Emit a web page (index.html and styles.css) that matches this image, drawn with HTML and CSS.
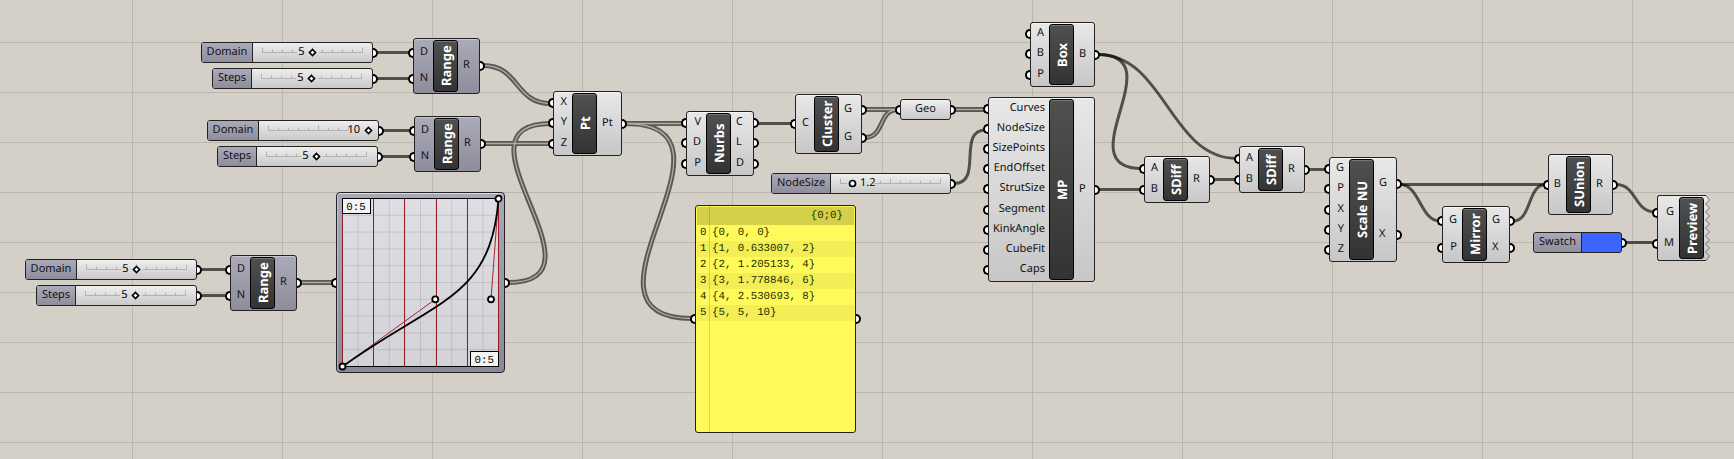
FILE: index.html
```
<!DOCTYPE html>
<html lang="en">
<head>
<meta charset="utf-8">
<title>Node graph</title>
<link rel="stylesheet" href="styles.css">
</head>
<body>
<svg class="defs" width="0" height="0">
  <defs>
    <linearGradient id="face" x1="0" y1="0" x2="0" y2="1"><stop offset="0" stop-color="#e8e8e8"/><stop offset="1" stop-color="#c7c7c7"/></linearGradient>
    <symbol id="rail-mid" viewBox="0 0 102 19">
      <path class="rail" d="M.5 4.500V9.500M10.500 6.500V9.500M20.500 6.500V9.500M30.500 6.500V9.500M50.500 4.500V9.500M60.500 6.500V9.500M70.500 6.500V9.500M80.500 6.500V9.500M90.500 6.500V9.500M100.500 4.500V9.500M0 9.500H35M57 9.500H101"/>
      <text x="36.200" y="12">5</text>
      <path class="knob" d="M50.500 6.500L53.500 9.500L50.500 12.500L47.500 9.500Z"/>
    </symbol>
    <symbol id="rail-end" viewBox="0 0 102 19">
      <path class="rail" d="M.5 4.500V9.500M10.500 6.500V9.500M20.500 6.500V9.500M30.500 6.500V9.500M40.500 6.500V9.500M50.500 4.500V9.500M60.500 6.500V9.500M70.500 6.500V9.500M80.500 6.500V9.500M0 9.500H80"/>
      <text x="79.500" y="12">10</text>
      <path class="knob" d="M100.500 6.500L103.500 9.500L100.500 12.500L97.500 9.500Z"/>
    </symbol>
    <symbol id="rail-low" viewBox="0 0 102 19">
      <path class="rail" d="M.5 4.500V9.500M40.500 6.500V9.500M50.500 4.500V9.500M60.500 6.500V9.500M70.500 6.500V9.500M80.500 6.500V9.500M90.500 6.500V9.500M100.500 4.500V9.500M0 9.500H7M34 9.500H101"/>
      <text x="20" y="12">1.2</text>
      <circle class="knob" cx="12.500" cy="9.500" r="3"/>
    </symbol>
  </defs>
</svg>
<main class="canvas">
  <svg class="wires" width="1734" height="459">
    <defs>
      <g id="lists">
        <path d="M300 282.500H333"/>
        <path d="M483 65.500C520 65.500 514 103.500 551 103.500"/>
        <path d="M484 143.500H551"/>
        <path d="M508 282.500C616 282.500 443 123.500 551 123.500"/>
        <path d="M625 123.500C760 123.500 557 318.500 692 318.500"/>
        <path d="M625 123.500H684"/>
        <path d="M865 109.500H898"/>
        <path d="M865 137.500C885 137.500 878 109.500 898 109.500"/>
        <path d="M954 109.500H986"/>
      </g>
    </defs>
    <g class="single">
      <path d="M376 52.500H411M376 78.500H411M382 130.500H412M381 156.500H412M200 269.500H228M200 295.500H228"/>
      <path d="M757 123.500H793"/>
      <path d="M954 183.500C984 183.500 956 130 986 130"/>
      <path d="M1098 54.500C1175 54.500 1065 168.500 1142 168.500"/>
      <path d="M1098 54.500C1165 54.500 1170 158.500 1237 158.500"/>
      <path d="M1098 189.500H1142M1213 179.500H1237M1308 169.500H1327M1400 184.500H1546M1625 242.500H1655"/>
      <path d="M1400 184.500C1420 184.500 1420 221 1440 221"/>
      <path d="M1513 221C1532 221 1527 184.500 1546 184.500"/>
      <path d="M1616 184.500C1637 184.500 1634 212 1655 212"/>
    </g>
    <use href="#lists" class="list-outer"/>
    <use href="#lists" class="list-inner"/>
  </svg>

  <div class="slider s1"><span class="tag">Domain</span><svg width="102" height="19"><use href="#rail-mid"/></svg><i class="grip right"></i></div>
  <div class="slider s2"><span class="tag">Steps</span><svg width="102" height="19"><use href="#rail-mid"/></svg><i class="grip right"></i></div>
  <div class="slider s3"><span class="tag">Domain</span><svg width="102" height="19"><use href="#rail-end"/></svg><i class="grip right"></i></div>
  <div class="slider s4"><span class="tag">Steps</span><svg width="102" height="19"><use href="#rail-mid"/></svg><i class="grip right"></i></div>
  <div class="slider s5"><span class="tag">Domain</span><svg width="102" height="19"><use href="#rail-mid"/></svg><i class="grip right"></i></div>
  <div class="slider s6"><span class="tag">Steps</span><svg width="102" height="19"><use href="#rail-mid"/></svg><i class="grip right"></i></div>
  <div class="slider s7"><span class="tag">NodeSize</span><svg width="102" height="19"><use href="#rail-low"/></svg><i class="grip right"></i></div>
  <div class="slider swatch"><span class="tag">Swatch</span><i class="grip right"></i></div>
  <div class="slider geo"><i class="grip left"></i><span>Geo</span><i class="grip right"></i></div>

  <div class="node muted range1"><div class="in"><span>D</span><span>N</span></div><b>Range</b><div class="out"><span>R</span></div></div>
  <div class="node muted range2"><div class="in"><span>D</span><span>N</span></div><b>Range</b><div class="out"><span>R</span></div></div>
  <div class="node muted range3"><div class="in"><span>D</span><span>N</span></div><b>Range</b><div class="out"><span>R</span></div></div>
  <div class="node pt"><div class="in"><span>X</span><span>Y</span><span>Z</span></div><b>Pt</b><div class="out"><span>Pt</span></div></div>
  <div class="node nurbs"><div class="in"><span>V</span><span>D</span><span>P</span></div><b>Nurbs</b><div class="out"><span>C</span><span>L</span><span>D</span></div></div>
  <div class="node cluster"><div class="in"><span>C</span></div><b>Cluster</b><div class="out"><span>G</span><span>G</span></div></div>
  <div class="node box"><div class="in"><span>A</span><span>B</span><span>P</span></div><b>Box</b><div class="out"><span>B</span></div></div>
  <div class="node mp"><div class="in"><span>Curves</span><span>NodeSize</span><span>SizePoints</span><span>EndOffset</span><span>StrutSize</span><span>Segment</span><span>KinkAngle</span><span>CubeFit</span><span>Caps</span></div><b>MP</b><div class="out"><span>P</span></div></div>
  <div class="node sdiff1"><div class="in"><span>A</span><span>B</span></div><b>SDiff</b><div class="out"><span>R</span></div></div>
  <div class="node sdiff2"><div class="in"><span>A</span><span>B</span></div><b>SDiff</b><div class="out"><span>R</span></div></div>
  <div class="node scale"><div class="in"><span>G</span><span>P</span><span>X</span><span>Y</span><span>Z</span></div><b>Scale NU</b><div class="out"><span>G</span><span>X</span></div></div>
  <div class="node mirror"><div class="in"><span>G</span><span>P</span></div><b>Mirror</b><div class="out"><span>G</span><span>X</span></div></div>
  <div class="node sunion"><div class="in"><span>B</span></div><b>SUnion</b><div class="out"><span>R</span></div></div>
  <div class="node preview">
    <svg class="torn" width="54" height="66"><path d="M49 .5H2.500Q.5 .5 .5 2.500V63.500Q.5 65.500 2.500 65.500H49L52.500 61L48.500 57L52.500 53L48.500 49L52.500 45L48.500 41L52.500 37L48.500 33L52.500 29L48.500 25L52.500 21L48.500 17L52.500 13L48.500 9L52.500 5Z" fill="url(#face)" stroke="#555" stroke-width=".8"/><path d="M49 .5H2.500Q.5 .5 .5 2.500V63.500Q.5 65.500 2.500 65.500H49" fill="none" stroke="#222"/></svg>
    <div class="in"><span>G</span><span>M</span></div><b>Preview</b>
  </div>

  <div class="mapper">
    <i class="grip left"></i><i class="grip right"></i>
    <svg class="plot" width="157" height="170">
      <rect x=".5" y=".5" width="156" height="168" fill="#fff" fill-opacity=".62"/>
      <path class="mesh" d="M16.100 0V168M31.700 0V168M47.300 0V168M62.900 0V168M78.500 0V168M94.100 0V168M109.700 0V168M125.300 0V168M140.900 0V168M0 17.300H156M0 34.100H156M0 50.900H156M0 67.700H156M0 84.500H156M0 101.300H156M0 118.100H156M0 134.900H156M0 151.700H156"/>
      <path d="M0 .5H157M0 168.500H157" stroke="#000"/>
      <path d="M.5 0V169M31.500 1V168M62.500 1V168M94.500 1V168M125.500 1V168M156.500 0V169" stroke="#931d22"/>
      <path d="M.5 168.500L93 101.500M156.500 .5L149 101.500" stroke="#a3272c" fill="none"/>
      <path d="M.5 168.500C93 101.500 149 101.500 156.500 .5" stroke="#000" stroke-width="1.800" fill="none"/>
      <g class="label"><rect x=".5" y=".5" width="28" height="15"/><text x="4.300" y="12">0:5</text><rect x="128.500" y="153.500" width="28" height="15"/><text x="132.600" y="165">0:5</text></g>
      <g class="handle"><circle cx=".5" cy="168.500" r="3"/><circle cx="93.300" cy="101.300" r="3"/><circle cx="149" cy="101.300" r="3"/><circle cx="156.500" cy=".7" r="3"/></g>
    </svg>
  </div>

  <div class="panel">
    <i class="grip left"></i><i class="grip right"></i>
    <div class="path">{0;0}</div>
    <ol>
      <li><span>0</span>{0, 0, 0}</li>
      <li><span>1</span>{1, 0.633007, 2}</li>
      <li><span>2</span>{2, 1.205133, 4}</li>
      <li><span>3</span>{3, 1.778846, 6}</li>
      <li><span>4</span>{4, 2.530693, 8}</li>
      <li><span>5</span>{5, 5, 10}</li>
    </ol>
  </div>
</main>
</body>
</html>
```

FILE: styles.css
```
*, *::before, *::after { box-sizing: border-box; }
body { margin: 0; overflow: hidden; font: 11px/14px "Noto Sans", "Open Sans", sans-serif; color: #111; text-rendering: geometricPrecision; }
.defs { position: absolute; }
.canvas {
  position: relative; width: 1734px; height: 459px; overflow: hidden;
  background-color: #d4d0c8;
  background-image: linear-gradient(90deg, #bbb7b0 1px, transparent 1px), linear-gradient(#bbb7b0 1px, transparent 1px);
  background-size: 150px 150px, 50px 50px;
  background-position: 132px 0, 0 42px;
}

/* wires */
.wires { display: block; fill: none; }
.single { stroke: #000; stroke-opacity: .62; stroke-width: 3; }
.single path { fill: none; }
.list-outer { stroke: #5a5853; stroke-width: 5; }
.list-inner { stroke: #b0aca5; stroke-width: 1.300; }

/* connection grips */
.grip, .in span::before, .out span::after {
  content: ""; position: absolute; top: 50%; width: 5px; height: 10px; margin-top: -5px;
  border: 2px solid #000; background: #fff;
}
.grip.left, .in span::before { left: -6px; border-right: 0; border-radius: 5px 0 0 5px; }
.grip.right, .out span::after { right: -6px; border-left: 0; border-radius: 0 5px 5px 0; }

/* components */
.node {
  position: absolute; display: grid; grid-template-columns: 18px 25px 1fr; grid-template-rows: 100%;
  padding: 1px 0; border: 1px solid #222; border-radius: 3px;
  background: linear-gradient(#e8e8e8, #c7c7c7);
  box-shadow: inset 0 1px #fff9;
}
.muted { background: linear-gradient(#abaaba, #8f8d9b); box-shadow: inset 0 1px #fff5; }
.in, .out { display: flex; flex-direction: column; }
.in span, .out span { position: relative; flex: 1; display: flex; align-items: center; padding-bottom: 2px; }
.in span { justify-content: flex-end; padding-right: 5px; }
.out span { padding-left: 5px; }
.node b {
  display: flex; align-items: center; justify-content: center;
  writing-mode: vertical-rl; transform: rotate(180deg);
  border: 1px solid #000; border-radius: 3px;
  background: linear-gradient(#333, #505050); box-shadow: inset 0 -1px #777;
  color: #fff; font-size: 13px; line-height: 18px; white-space: nowrap;
}
.range1 { left: 413px; top: 38px; width: 67px; height: 56px; grid-template-columns: 19px 25px 1fr; }
.range2 { left: 414px; top: 116px; width: 67px; height: 56px; grid-template-columns: 19px 25px 1fr; }
.range3 { left: 230px; top: 255px; width: 67px; height: 56px; grid-template-columns: 19px 25px 1fr; }
.pt { left: 553px; top: 91px; width: 69px; height: 65px; }
.nurbs { left: 686px; top: 111px; width: 68px; height: 65px; grid-template-columns: 19px 25px 1fr; }
.cluster { left: 795px; top: 94px; width: 67px; height: 60px; }
.box { left: 1030px; top: 22px; width: 65px; height: 65px; }
.mp { left: 988px; top: 97px; width: 107px; height: 185px; grid-template-columns: 60px 25px 1fr; }
.mp .in span { padding-right: 4px; }
.sdiff1 { left: 1144px; top: 156px; width: 66px; height: 47px; }
.sdiff2 { left: 1239px; top: 146px; width: 66px; height: 47px; }
.scale { left: 1329px; top: 157px; width: 68px; height: 105px; grid-template-columns: 19px 25px 1fr; }
.mirror { left: 1442px; top: 206px; width: 68px; height: 57px; grid-template-columns: 19px 25px 1fr; }
.sunion { left: 1548px; top: 154px; width: 65px; height: 61px; grid-template-columns: 17px 25px 1fr; }
.preview { left: 1657px; top: 195px; width: 54px; height: 66px; grid-template-columns: 21px 25px 1fr; background: none; border-color: transparent; box-shadow: none; z-index: 0; }
.torn { position: absolute; left: -1px; top: -1px; z-index: -1; }

/* sliders and small parameters */
.slider {
  position: absolute; display: flex; align-items: center; justify-content: space-around;
  height: 21px; border: 1px solid #222; border-radius: 3px;
  background: linear-gradient(#eee, #c9c9c9);
}
.slider svg { overflow: visible; }
.tag {
  align-self: stretch; display: flex; align-items: center; justify-content: center; padding-bottom: 2px;
  border-right: 1px solid #222; border-radius: 2px 0 0 2px; background: linear-gradient(#abaaba, #8f8d9b);
}
.slider > svg { margin: 0 auto; }
symbol { overflow: visible; }
.rail { stroke: #b2b2b2; fill: none; }
.knob { stroke: #000; stroke-width: 1.700; fill: #fff; }
.s1 { left: 201px; top: 42px; width: 172px; } .s1 .tag { width: 51px; }
.s2 { left: 212px; top: 68px; width: 161px; } .s2 .tag { width: 39px; }
.s3 { left: 207px; top: 120px; width: 172px; } .s3 .tag { width: 51px; }
.s4 { left: 217px; top: 146px; width: 161px; } .s4 .tag { width: 39px; }
.s5 { left: 25px; top: 259px; width: 172px; } .s5 .tag { width: 51px; }
.s6 { left: 36px; top: 285px; width: 161px; } .s6 .tag { width: 39px; }
.s7 { left: 771px; top: 173px; width: 180px; } .s7 .tag { width: 59px; }
.swatch { left: 1533px; top: 232px; width: 89px; justify-content: flex-start; background: #3c64ff; }
.swatch .tag { width: 48px; }
.geo { left: 900px; top: 99px; width: 51px; padding-bottom: 2px; }

/* graph mapper */
.mapper {
  position: absolute; left: 336px; top: 192px; width: 169px; height: 181px; padding: 5px;
  border: 1px solid #222; border-radius: 4px; background: linear-gradient(#a9a8b8, #8b8998); box-shadow: inset 0 1px #fff9, inset 1px 0 #fff5;
}
.plot { display: block; overflow: visible; }
.mesh { stroke: #000; stroke-opacity: .1; fill: none; }
.label rect { fill: #f4f4f4; stroke: #000; }
.label text { font: 10.750px "Liberation Mono", monospace; }
.handle { fill: #fff; stroke: #000; stroke-width: 1.800; }

/* text panel */
.panel {
  position: absolute; left: 695px; top: 205px; width: 161px; height: 228px; padding: 1px;
  border: 1px solid #222; border-radius: 3px; font: 10.750px/16px "Liberation Mono", monospace; color: #1c3000;
  background: linear-gradient(90deg, transparent 13px, #dbd54c 13px, #dbd54c 14px, transparent 14px), #fffa5a;
}
.path { height: 18px; line-height: 18px; padding-right: 11px; text-align: right; background: #0000002a; }
.panel ol { margin: 0; padding: 0; list-style: none; }
.panel li { height: 16px; white-space: pre; }
.panel li:nth-child(even) { background: #0000000c; }
.panel li span { display: inline-block; width: 15px; padding-left: 3px; }
```
